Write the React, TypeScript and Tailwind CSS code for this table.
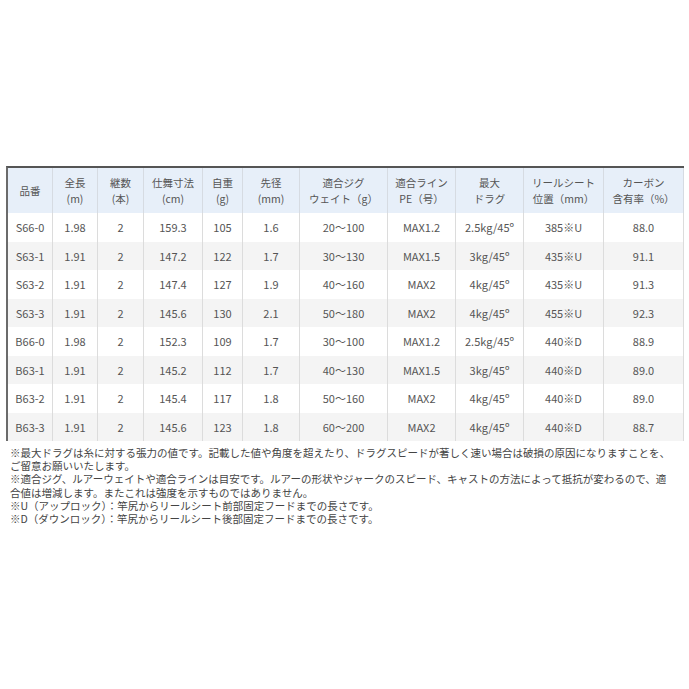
const COLS = [
  "w-[45px]",
  "w-[45px]",
  "w-[46px]",
  "w-[59px]",
  "w-[40px]",
  "w-[57px]",
  "w-[88px]",
  "w-[68px]",
  "w-[68px]",
  "w-[80px]",
  "w-[80px]",
];

const HEAD: [string, string?][] = [
  ["品番"],
  ["全長", "(m)"],
  ["継数", "(本)"],
  ["仕舞寸法", "(cm)"],
  ["自重", "(g)"],
  ["先径", "(mm)"],
  ["適合ジグ", "ウェイト（g）"],
  ["適合ライン", "PE（号）"],
  ["最大", "ドラグ"],
  ["リールシート", "位置（mm）"],
  ["カーボン", "含有率（%）"],
];

const ROWS = [
  ["S66-0", "1.98", "2", "159.3", "105", "1.6", "20～100", "MAX1.2", "2.5kg/45º", "385※U", "88.0"],
  ["S63-1", "1.91", "2", "147.2", "122", "1.7", "30～130", "MAX1.5", "3kg/45º", "435※U", "91.1"],
  ["S63-2", "1.91", "2", "147.4", "127", "1.9", "40～160", "MAX2", "4kg/45º", "435※U", "91.3"],
  ["S63-3", "1.91", "2", "145.6", "130", "2.1", "50～180", "MAX2", "4kg/45º", "455※U", "92.3"],
  ["B66-0", "1.98", "2", "152.3", "109", "1.7", "30～100", "MAX1.2", "2.5kg/45º", "440※D", "88.9"],
  ["B63-1", "1.91", "2", "145.2", "112", "1.7", "40～130", "MAX1.5", "3kg/45º", "440※D", "89.0"],
  ["B63-2", "1.91", "2", "145.4", "117", "1.8", "50～160", "MAX2", "4kg/45º", "440※D", "89.0"],
  ["B63-3", "1.91", "2", "145.6", "123", "1.8", "60～200", "MAX2", "4kg/45º", "440※D", "88.7"],
];

const NOTES = [
  "※最大ドラグは糸に対する張力の値です。記載した値や角度を超えたり、ドラグスピードが著しく速い場合は破損の原因になりますことを、",
  "ご留意お願いいたします。",
  "※適合ジグ、ルアーウェイトや適合ラインは目安です。ルアーの形状やジャークのスピード、キャストの方法によって抵抗が変わるので、適",
  "合値は増減します。またこれは強度を示すものではありません。",
  "※U（アップロック）：竿尻からリールシート前部固定フードまでの長さです。",
  "※D（ダウンロック）：竿尻からリールシート後部固定フードまでの長さです。",
];

export default function App() {
  return (
    <div
      className="w-[689px] h-[689px] bg-white pt-[166px]"
      style={{ fontFamily: '"Noto Sans CJK JP", "Noto Sans", sans-serif' }}
    >
      {/* spec table */}
      <div className="ml-[6px] w-[678px] border-l-2 border-t-2 border-l-[#6b6b6b] border-t-[#555]">
        <div className="flex h-[45px] bg-[#e7eff9]">
          {HEAD.map((h, i) => (
            <div
              key={i}
              className={`${COLS[i]} shrink-0 border-r border-[#d6dbe2] flex flex-col items-center justify-center text-[10.5px] leading-[16px] text-[#555]`}
            >
              <span>{h[0]}</span>
              {h[1] && <span>{h[1]}</span>}
            </div>
          ))}
        </div>
        {ROWS.map((r, ri) => (
          <div key={ri} className={`flex h-[28.5px] ${ri % 2 ? "bg-[#f4f4f4]" : "bg-white"}`}>
            {r.map((c, i) => (
              <div
                key={i}
                className={`${COLS[i]} shrink-0 border-r border-[#dcdcdc] flex items-center justify-center text-[11px] text-[#555]`}
              >
                {c}
              </div>
            ))}
          </div>
        ))}
      </div>

      {/* notes */}
      <div className="mt-[5px] pl-[10px] text-[10.5px] leading-[13.2px] text-[#444] whitespace-nowrap">
        {NOTES.map((n, i) => (
          <div key={i}>{n}</div>
        ))}
      </div>
    </div>
  );
}
